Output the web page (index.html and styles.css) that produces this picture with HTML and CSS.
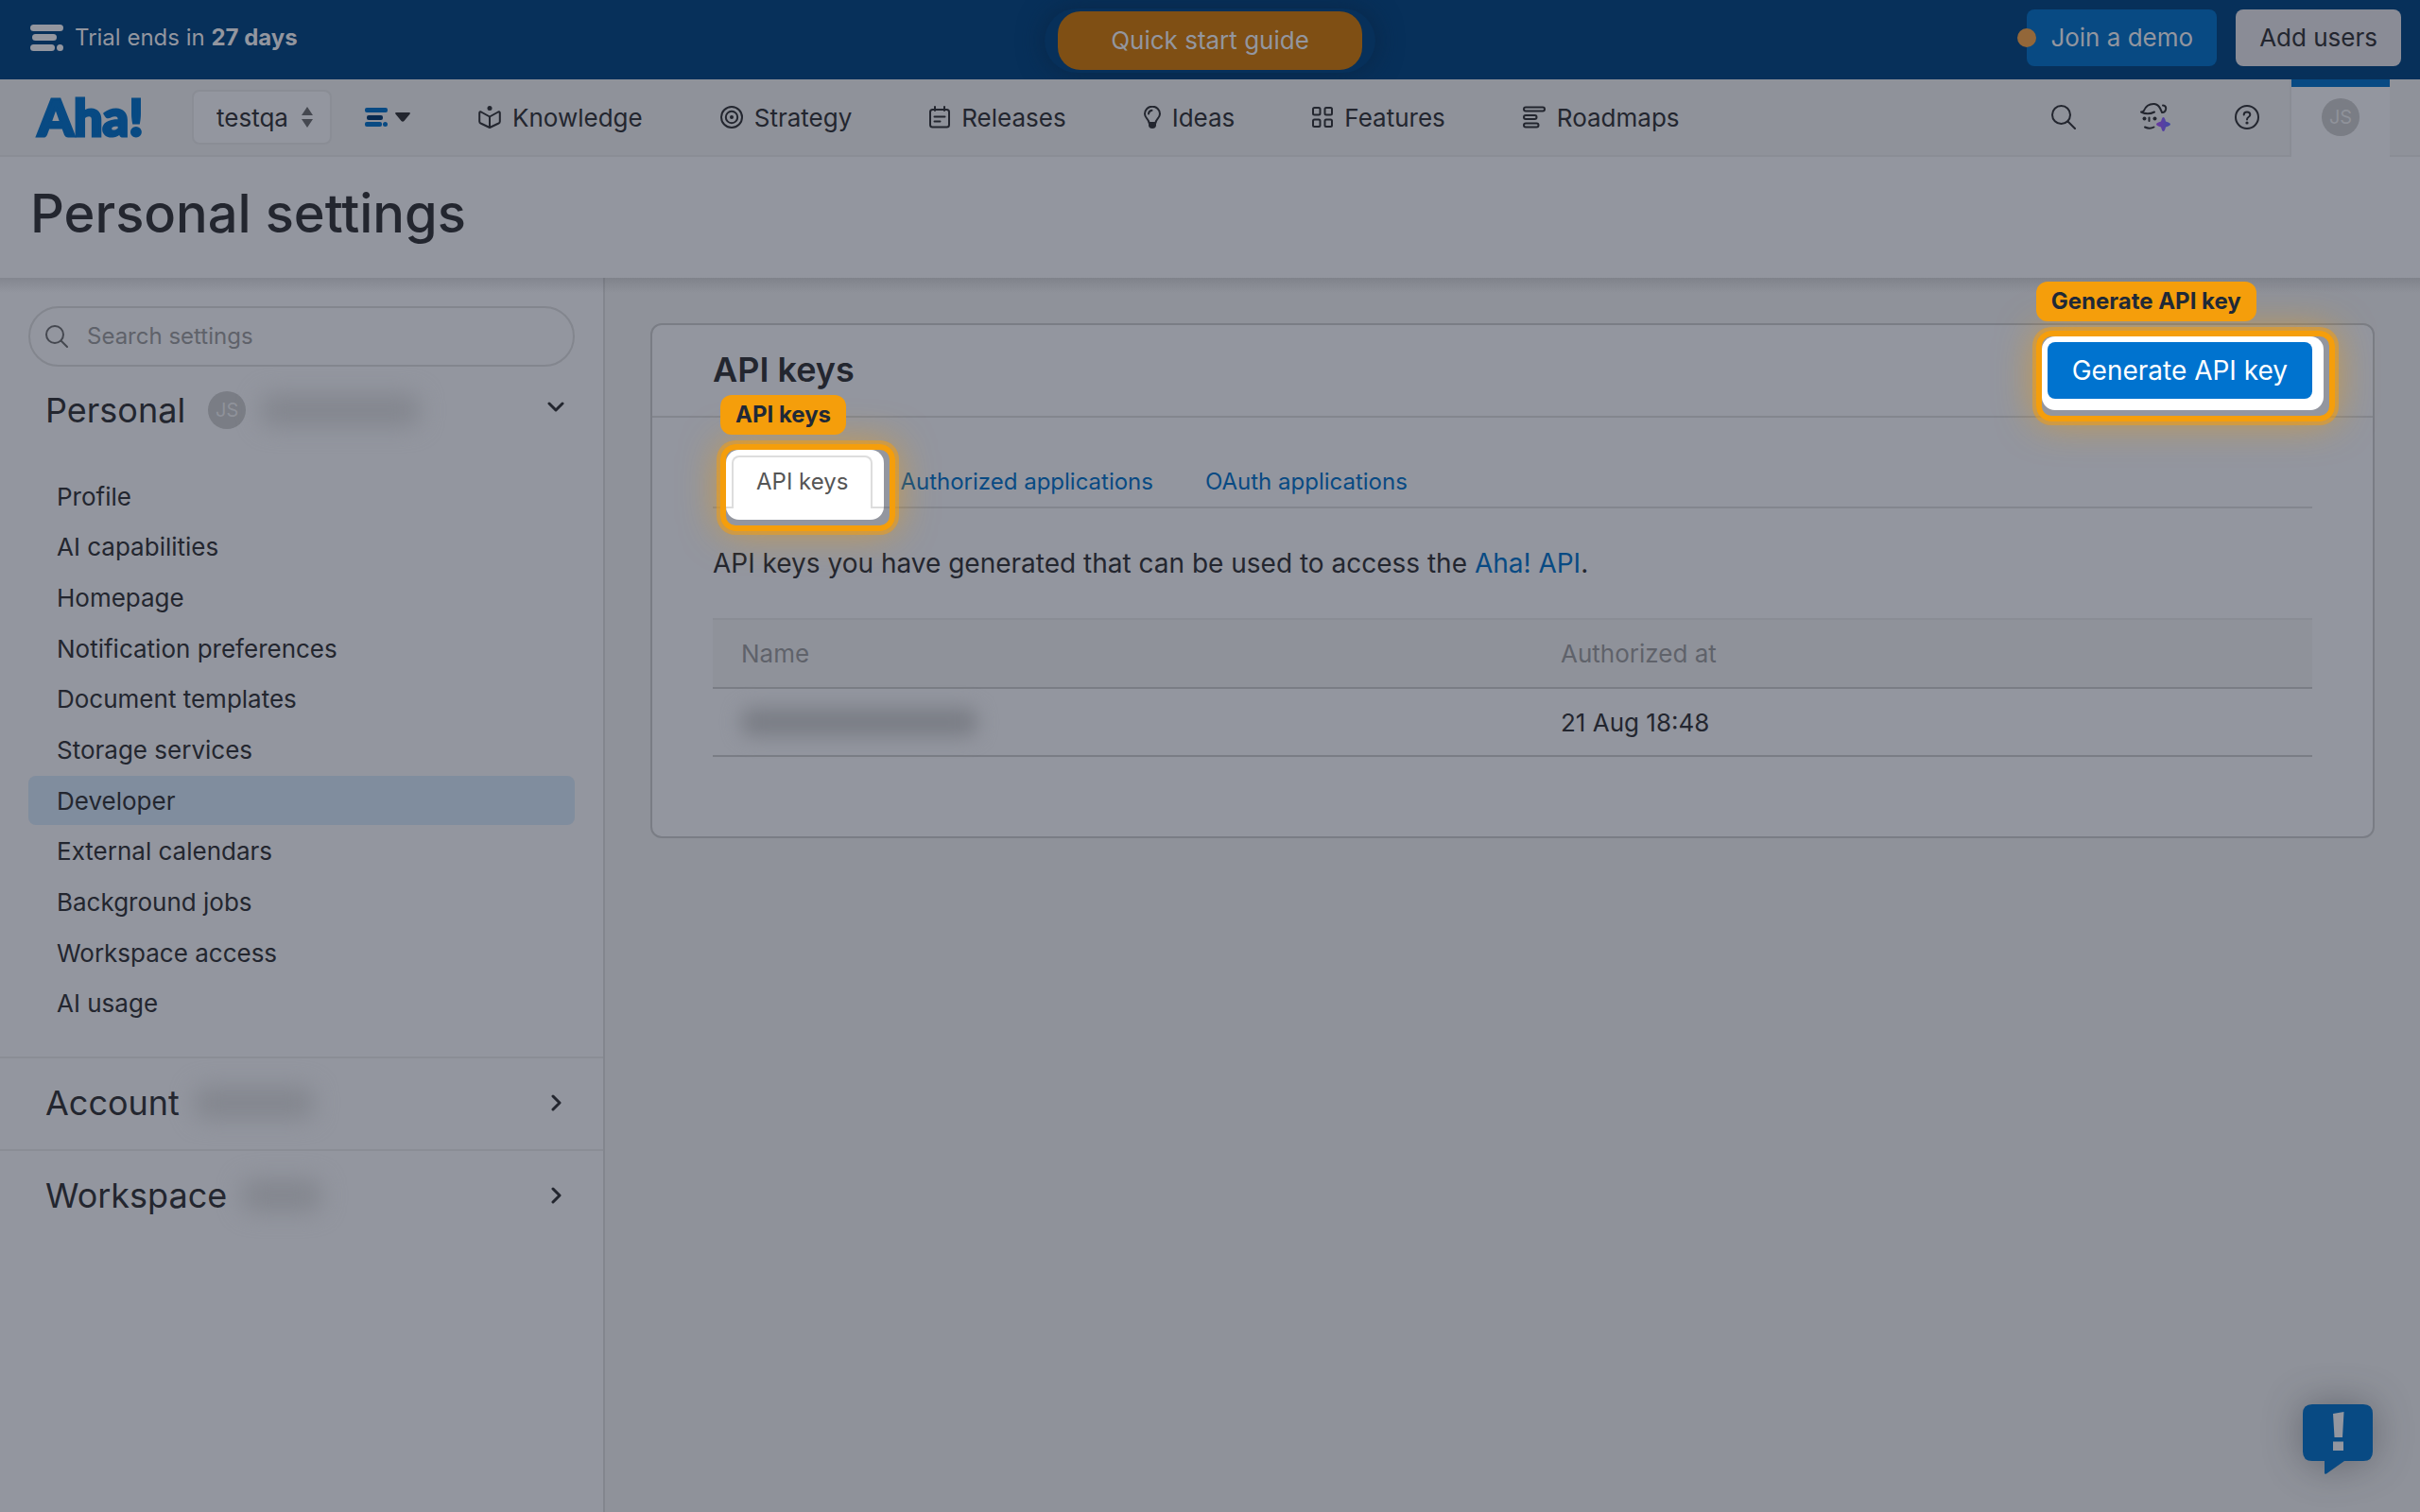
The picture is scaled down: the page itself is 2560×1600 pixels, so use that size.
FILE: index.html
```html
<!DOCTYPE html>
<html lang="en">
<head>
    <meta charset="UTF-8">
    <meta name="viewport" content="width=device-width, initial-scale=1.0">
    <title>Personal settings</title>
    <link rel="stylesheet" href="styles.css">
</head>
<body>
    <!-- Trial banner -->
    <div class="trial-bar">
        <div class="trial-info">
            <svg width="35" height="28" viewBox="0 0 35 28" fill="currentColor">
                <rect x="0" y="0" width="35" height="7" rx="3.5"/>
                <rect x="2" y="10" width="26" height="7" rx="3.5"/>
                <rect x="0" y="21" width="26" height="7" rx="3.5"/>
                <circle cx="31.5" cy="24.5" r="3.5"/>
            </svg>
            <span>Trial ends in <b>27 days</b></span>
        </div>
        <div class="guide">
            <button class="guide-button">Quick start guide</button>
        </div>
        <div class="trial-actions">
            <button class="button button-demo">Join a demo</button>
            <button class="button button-light">Add users</button>
        </div>
    </div>

    <!-- Main navigation -->
    <nav class="navbar">
        <a href="#" class="logo">Aha!</a>
        <div class="workspace-select">
            <select aria-label="Workspace">
                <option>testqa</option>
            </select>
            <svg width="12" height="22" viewBox="0 0 12 22" fill="currentColor"><path d="M6 0l6 9H0zM6 22l6-9H0z"/></svg>
        </div>
        <button class="hierarchy" aria-label="Hierarchy">
            <svg width="24" height="20" viewBox="0 0 24 20">
                <rect class="blue" x="0" y="0" width="24" height="5" rx="2"/>
                <rect class="navy" x="2" y="8" width="17" height="5" rx="2"/>
                <rect class="blue" x="0" y="15" width="18" height="5" rx="2"/>
                <circle class="blue" cx="21.500" cy="17.500" r="2.500"/>
            </svg>
            <svg width="16" height="10" viewBox="0 0 16 10" fill="currentColor"><path d="M1.500 0h13Q17 0 15.300 2L9.500 9Q8 10.500 6.500 9L.7 2Q-1 0 1.500 0z"/></svg>
        </button>
        <div class="nav-links">
            <a href="#">
                <svg width="24" height="24" viewBox="0 0 24 24" class="line"><circle cx="12" cy="2.500" r="2.500" fill="currentColor" stroke="none"/><path d="M12 23L2.500 18.500Q1.200 17.800 1.200 16.500V7.500Q1.300 5.800 3 6.500L12 11.500L21 6.500Q22.700 5.800 22.800 7.500V16.500Q22.800 17.800 21.500 18.500zM12 11.500V23"/></svg>
                Knowledge
            </a>
            <a href="#">
                <svg width="24" height="24" viewBox="0 0 24 24" class="line"><circle cx="12" cy="12" r="11"/><circle cx="12" cy="12" r="6.200"/><circle cx="12" cy="12" r="2" fill="currentColor" stroke="none"/></svg>
                Strategy
            </a>
            <a href="#">
                <svg width="22" height="24" viewBox="0 0 22 24" class="line"><rect x="1" y="4" width="20" height="18.500" rx="2.500"/><path d="M6 1V5M16 1V5M5.500 11.500H16.500M5.500 16.500H11.500"/></svg>
                Releases
            </a>
            <a href="#">
                <svg width="18" height="24" viewBox="0 0 18 24" class="line"><path d="M5.500 18C5.500 14 1 13 1 8.500A8 7.800 0 0 1 17 8.500C17 13 12.500 14 12.500 18z"/><path d="M5 18H13V21Q12.500 24 9 24T5 21z" fill="currentColor" stroke="none"/><path d="M5 8.500Q5.200 5.300 8.500 4.800"/></svg>
                Ideas
            </a>
            <a href="#">
                <svg width="22" height="24" viewBox="0 0 22 24" class="line"><rect x="1" y="2" width="7.500" height="7.500" rx="1.500"/><rect x="13.500" y="2" width="7.500" height="7.500" rx="1.500"/><rect x="1" y="14.500" width="7.500" height="7.500" rx="1.500"/><rect x="13.500" y="14.500" width="7.500" height="7.500" rx="1.500"/></svg>
                Features
            </a>
            <a href="#">
                <svg width="24" height="24" viewBox="0 0 24 24" class="line"><rect x="1" y="1.500" width="22" height="4" rx="2"/><rect x="1" y="10" width="13.500" height="4" rx="2"/><rect x="1" y="18.500" width="15.500" height="4" rx="2"/></svg>
                Roadmaps
            </a>
        </div>
        <div class="nav-tools">
            <button aria-label="Search">
                <svg width="26" height="26" viewBox="0 0 26 26" class="line"><circle cx="10.500" cy="10.500" r="9.500"/><path d="M17.500 17.500L25 25"/></svg>
            </button>
            <button aria-label="AI assistant">
                <svg width="32" height="32" viewBox="0 0 32 32" class="line">
                    <path d="M1 10.500Q3 10.500 4 9Q7 1.500 15 2Q19 2.500 21 6.500T23 11Q26 11.500 27 8Q28 4 24 3.500M1 10.500Q8 14 15 10.500"/>
                    <path d="M9.500 16.500V20M5 26.500Q10 29 14.500 26.500"/>
                    <circle cx="4.500" cy="17.500" r="2" fill="currentColor" stroke="none"/>
                    <circle cx="15.500" cy="17.500" r="2" fill="currentColor" stroke="none"/>
                    <defs><linearGradient id="spark"><stop offset="0" stop-color="#6b38a0"/><stop offset="1" stop-color="#3f4aa5"/></linearGradient></defs>
                    <path d="M24.500 16Q26 16 27 20.500Q32 22 32 23.500T27 26.500Q26 31 24.500 31T22 26.500Q17 25 17 23.500T22 20.500Q23 16 24.500 16z" fill="url(#spark)" stroke="none"/>
                </svg>
            </button>
            <button aria-label="Help">
                <svg width="26" height="26" viewBox="0 0 26 26" class="line"><circle cx="13" cy="13" r="12"/><path d="M9.700 10.500Q9.700 7.500 13 7.500T16.300 10.300Q16.300 12 14.500 13Q13 14 13 15.500"/><circle cx="13" cy="19" r="1.600" fill="currentColor" stroke="none"/></svg>
            </button>
        </div>
        <a href="#" class="nav-profile"><span class="avatar">JS</span></a>
    </nav>

    <header class="page-header">
        <h1>Personal settings</h1>
    </header>

    <div class="content">
        <!-- Sidebar -->
        <aside class="sidebar">
            <div class="search-box">
                <svg width="24" height="24" viewBox="0 0 24 24" class="line"><circle cx="10" cy="10" r="9"/><path d="M16.500 16.500L23 23"/></svg>
                <input type="text" placeholder="Search settings" aria-label="Search settings">
            </div>
            <button class="section-toggle personal">
                Personal
                <span class="avatar">JS</span>
                <span class="redacted redacted-name"></span>
                <svg width="18" height="11" viewBox="0 0 18 11" class="chevron"><path d="M2 2L9 9L16 2"/></svg>
            </button>
            <ul class="settings-list">
                <li><a href="#">Profile</a></li>
                <li><a href="#">AI capabilities</a></li>
                <li><a href="#">Homepage</a></li>
                <li><a href="#">Notification preferences</a></li>
                <li><a href="#">Document templates</a></li>
                <li><a href="#">Storage services</a></li>
                <li><a href="#" class="active">Developer</a></li>
                <li><a href="#">External calendars</a></li>
                <li><a href="#">Background jobs</a></li>
                <li><a href="#">Workspace access</a></li>
                <li><a href="#">AI usage</a></li>
            </ul>
            <button class="section-toggle">
                Account
                <span class="redacted redacted-account"></span>
                <svg width="11" height="18" viewBox="0 0 11 18" class="chevron"><path d="M2 2L9 9L2 16"/></svg>
            </button>
            <button class="section-toggle">
                Workspace
                <span class="redacted redacted-workspace"></span>
                <svg width="11" height="18" viewBox="0 0 11 18" class="chevron"><path d="M2 2L9 9L2 16"/></svg>
            </button>
        </aside>

        <!-- API keys panel -->
        <main class="main">
            <section class="card">
                <div class="card-header">
                    <h2>API keys</h2>
                    <div class="spotlight">
                        <span class="spotlight-tag">Generate API key</span>
                        <button class="button button-primary">Generate API key</button>
                    </div>
                </div>
                <div class="card-body">
                    <div class="tabs">
                        <div class="spotlight spotlight-tab">
                            <span class="spotlight-tag">API keys</span>
                            <a href="#" class="tab tab-active">API keys</a>
                        </div>
                        <a href="#" class="tab">Authorized applications</a>
                        <a href="#" class="tab">OAuth applications</a>
                    </div>
                    <p>API keys you have generated that can be used to access the <a href="#">Aha! API</a>.</p>
                    <table class="keys-table">
                        <thead>
                            <tr><th class="name-col">Name</th><th>Authorized at</th></tr>
                        </thead>
                        <tbody>
                            <tr><td><span class="redacted redacted-key"></span></td><td>21 Aug 18:48</td></tr>
                        </tbody>
                    </table>
                </div>
            </section>
        </main>
    </div>

    <button class="chat-button" aria-label="Support">
        <svg width="74" height="74" viewBox="0 0 74 74">
            <path d="M10 0H64Q74 0 74 10V50Q74 60 64 60H44L25 73.500Q23 74.500 23 72.500V60H10Q0 60 0 50V10Q0 0 10 0z" fill="#084a83"/>
            <path d="M32 10L43.500 8L42 35H33.500zM32 39.500H43V49H32z" fill="#93969f"/>
        </svg>
    </button>
</body>
</html>
```
FILE: styles.css
```css
:root {
    --surface: #93969f;
    --shade: #8f929a;
    --line: #83868e;
    --line-dark: #7a7d85;
    --line-soft: #8a8d95;
    --text: #23262f;
    --blue: #084a83;
    --bar: #07305a;
    --orange: #f59e0b;
}

* {
    box-sizing: border-box;
}

body {
    margin: 0;
    min-height: 100vh;
    display: flex;
    flex-direction: column;
    background: var(--shade);
    color: var(--text);
    font-family: Inter, "Liberation Sans", sans-serif;
    font-size: 26px;
}

a {
    color: var(--blue);
    text-decoration: none;
}

button, input, select {
    font: inherit;
    color: inherit;
    border: none;
    background: none;
    padding: 0;
    margin: 0;
}

button {
    cursor: pointer;
}

svg {
    display: block;
    flex: none;
}

.line {
    fill: none;
    stroke: currentColor;
    stroke-width: 2;
    stroke-linecap: round;
    stroke-linejoin: round;
}

.chevron {
    fill: none;
    stroke: currentColor;
    stroke-width: 3;
    stroke-linecap: round;
    stroke-linejoin: round;
    margin-left: auto;
}

.avatar {
    display: flex;
    align-items: center;
    justify-content: center;
    width: 40px;
    height: 40px;
    border-radius: 50%;
    background: var(--line-dark);
    color: var(--shade);
    font-size: 20px;
}

/* Trial banner */
.trial-bar {
    display: grid;
    grid-template-columns: 1fr auto 1fr;
    height: 84px;
    padding: 0 20px 0 32px;
    background: var(--bar);
    color: var(--surface);
    overflow: hidden;
}

.trial-info {
    display: flex;
    align-items: center;
    gap: 12px;
    height: 80px;
    font-size: 24px;
}

.trial-info span {
    padding-bottom: 2px;
}

.guide {
    align-self: start;
    margin-top: 9px;
    margin-right: 12px;
    padding: 3px 14px;
    border-radius: 34px;
    background: var(--bar);
    box-shadow: 0 0 28px #0a2747;
}

.guide-button {
    height: 62px;
    padding: 0 56px 2px;
    border-radius: 24px;
    background: #7f4f14;
}

.trial-actions {
    display: flex;
    align-items: center;
    justify-content: flex-end;
    gap: 20px;
    height: 80px;
}

.button {
    height: 60px;
    padding: 0 26px;
    border-radius: 8px;
}

.trial-actions .button {
    padding: 0 25px 2px;
}

.button-demo {
    position: relative;
    background: var(--blue);
}

.button-demo::before {
    content: "";
    position: absolute;
    left: -10px;
    top: 20px;
    width: 20px;
    height: 20px;
    border-radius: 50%;
    background: #936739;
}

.button-light {
    background: #8a8c96;
    color: var(--text);
}

.button-primary {
    background: #0073cf;
    color: #fff;
    font-size: 28px;
}

/* Navigation */
.navbar {
    display: flex;
    align-items: center;
    height: 82px;
    padding: 0 32px 2px 40px;
    background: linear-gradient(var(--line-soft), var(--line-soft)) bottom / 100% 2px no-repeat var(--shade);
}

.logo {
    width: 163px;
    font-family: Lato, "Open Sans", sans-serif;
    font-weight: 900;
    font-size: 54px;
    line-height: 80px;
    -webkit-text-stroke: 3px var(--blue);
}

.workspace-select {
    position: relative;
}

.workspace-select select {
    appearance: none;
    display: block;
    width: 148px;
    height: 58px;
    padding: 0 24px;
    border: 2px solid var(--line-soft);
    border-radius: 8px;
    background: var(--surface);
}

.workspace-select svg {
    position: absolute;
    right: 20px;
    top: 18px;
    color: #454850;
    pointer-events: none;
}

.hierarchy {
    display: flex;
    align-items: center;
    gap: 8px;
    margin-left: 35px;
}

.blue {
    fill: var(--blue);
}

.navy {
    fill: #082a50;
}

.nav-links {
    display: flex;
    gap: 82px;
    margin-left: 72px;
}

.nav-links a {
    display: flex;
    align-items: center;
    gap: 12px;
    color: var(--text);
}

.nav-tools {
    display: flex;
    align-items: center;
    gap: 68px;
    margin-left: auto;
    margin-right: 32px;
}

.nav-profile {
    display: flex;
    align-items: center;
    justify-content: center;
    align-self: stretch;
    width: 106px;
    margin-bottom: -2px;
    padding-bottom: 2px;
    border-left: 2px solid var(--line-soft);
    background: linear-gradient(var(--blue), var(--blue)) top / 100% 8px no-repeat var(--surface);
}

/* Page header */
.page-header {
    position: relative;
    z-index: 1;
    height: 128px;
    padding: 0 32px;
    background: var(--surface);
}

/* shadow only falls below the header */
.page-header::after {
    content: "";
    position: absolute;
    left: 0;
    right: 0;
    top: 100%;
    height: 16px;
    background: linear-gradient(rgba(35, 38, 47, 0.14), rgba(35, 38, 47, 0));
}

.page-header h1 {
    margin: 0;
    font-size: 56px;
    font-weight: 500;
    line-height: 120px;
}

.content {
    flex: 1;
    display: flex;
}

/* Sidebar */
.sidebar {
    width: 640px;
    flex: none;
    padding-top: 30px;
    border-right: 2px solid var(--line);
    background: var(--surface);
}

.search-box {
    display: flex;
    align-items: center;
    gap: 20px;
    height: 64px;
    margin: 0 30px;
    padding: 0 16px;
    border: 2px solid var(--line);
    border-radius: 32px;
    color: #454850;
}

.search-box input {
    flex: 1;
    padding-bottom: 2px;
    outline: none;
    font-size: 24px;
}

.search-box input::placeholder {
    color: #5f626a;
    opacity: 1;
}

.section-toggle {
    display: flex;
    align-items: center;
    width: 100%;
    height: 98px;
    padding: 0 44px 2px 48px;
    border-top: 2px solid var(--line-soft);
    font-size: 36px;
}

.section-toggle.personal {
    height: 92px;
    padding: 0 41px 0 48px;
    border-top: none;
}

.personal .chevron {
    margin-bottom: 8px;
}

.section-toggle .avatar {
    margin-left: 24px;
}

.redacted {
    display: block;
    height: 34px;
    border-radius: 12px;
    background: var(--line);
    filter: blur(12px);
}

.redacted-name {
    width: 168px;
    margin-left: 16px;
}

.redacted-account {
    width: 126px;
    margin-left: 16px;
}

.redacted-workspace {
    width: 84px;
    margin-left: 16px;
}

.redacted-key {
    width: 250px;
    height: 30px;
    background: var(--line-dark);
    filter: blur(10px);
}

.settings-list {
    display: grid;
    gap: 1px;
    min-height: 589px;
    margin: 19px 30px 30px;
    padding: 0;
    list-style: none;
}

.settings-list a {
    display: flex;
    align-items: center;
    height: 100%;
    padding: 0 30px;
    border-radius: 8px;
    color: var(--text);
}

.settings-list .active {
    background: #808d9e;
}

/* Card */
.main {
    flex: 1;
    padding: 48px;
}

.card {
    border: 2px solid var(--line-dark);
    border-radius: 12px;
    background: var(--surface);
}

.card-header {
    display: flex;
    align-items: center;
    justify-content: space-between;
    height: 98px;
    padding: 0 64px;
    border-bottom: 2px solid var(--line);
}

.card-header h2 {
    margin: 0;
    padding-bottom: 2px;
    font-size: 36px;
    font-weight: 600;
}

.card-body {
    padding: 40px 64px 84px;
}

.tabs {
    display: flex;
    gap: 3px;
    padding-left: 20px;
    border-bottom: 2px solid var(--line);
}

.tab {
    display: block;
    height: 54px;
    padding: 0 26px;
    font-size: 24px;
    line-height: 56px;
}

.tab-active {
    height: 56px;
    padding: 0 24px;
    border: 2px solid #ddd;
    border-bottom: none;
    border-radius: 8px 8px 0 0;
    background: #fff;
    color: #555;
    line-height: 52px;
}

.card-body p {
    margin: 40px 0;
    font-size: 28px;
    line-height: 36px;
}

/* Highlighted controls */
.spotlight {
    position: relative;
    z-index: 2;
    isolation: isolate;
}

.spotlight-tab {
    margin-bottom: -2px;
}

.spotlight::before {
    content: "";
    position: absolute;
    inset: -6px -12px -12px -6px;
    z-index: -1;
    border-radius: 14px;
    background: #fff;
}

.spotlight-tab::before {
    background: linear-gradient(#ddd, #ddd) 0 60px / 100% 2px no-repeat #fff;
}

.spotlight::after {
    content: "";
    position: absolute;
    inset: -12px -24px -24px -12px;
    border: 6px solid var(--orange);
    border-radius: 16px;
    box-shadow: 0 0 0 4px rgba(245, 158, 11, 0.5), 0 0 40px rgba(245, 158, 11, 0.6);
    pointer-events: none;
}

.spotlight-tag {
    position: absolute;
    left: -12px;
    bottom: calc(100% + 22px);
    z-index: 1;
    padding: 0 16px;
    border-radius: 12px;
    background: var(--orange);
    color: #1f2937;
    font-size: 24px;
    font-weight: 700;
    line-height: 42px;
    white-space: nowrap;
}

/* Table */
.keys-table {
    width: 100%;
    border-collapse: collapse;
    table-layout: fixed;
}

.keys-table th,
.keys-table td {
    height: 72px;
    padding: 0 30px;
    border-bottom: 2px solid var(--line-dark);
    text-align: left;
}

.keys-table th {
    height: 73px;
    border-top: 2px solid var(--line-soft);
    background: var(--shade);
    color: #5f626a;
    font-weight: 400;
}

.keys-table .name-col {
    width: 867px;
}

/* Support bubble */
.chat-button {
    position: fixed;
    right: 50px;
    bottom: 40px;
    filter: drop-shadow(0 0 20px rgba(35, 38, 47, 0.4));
}
```
